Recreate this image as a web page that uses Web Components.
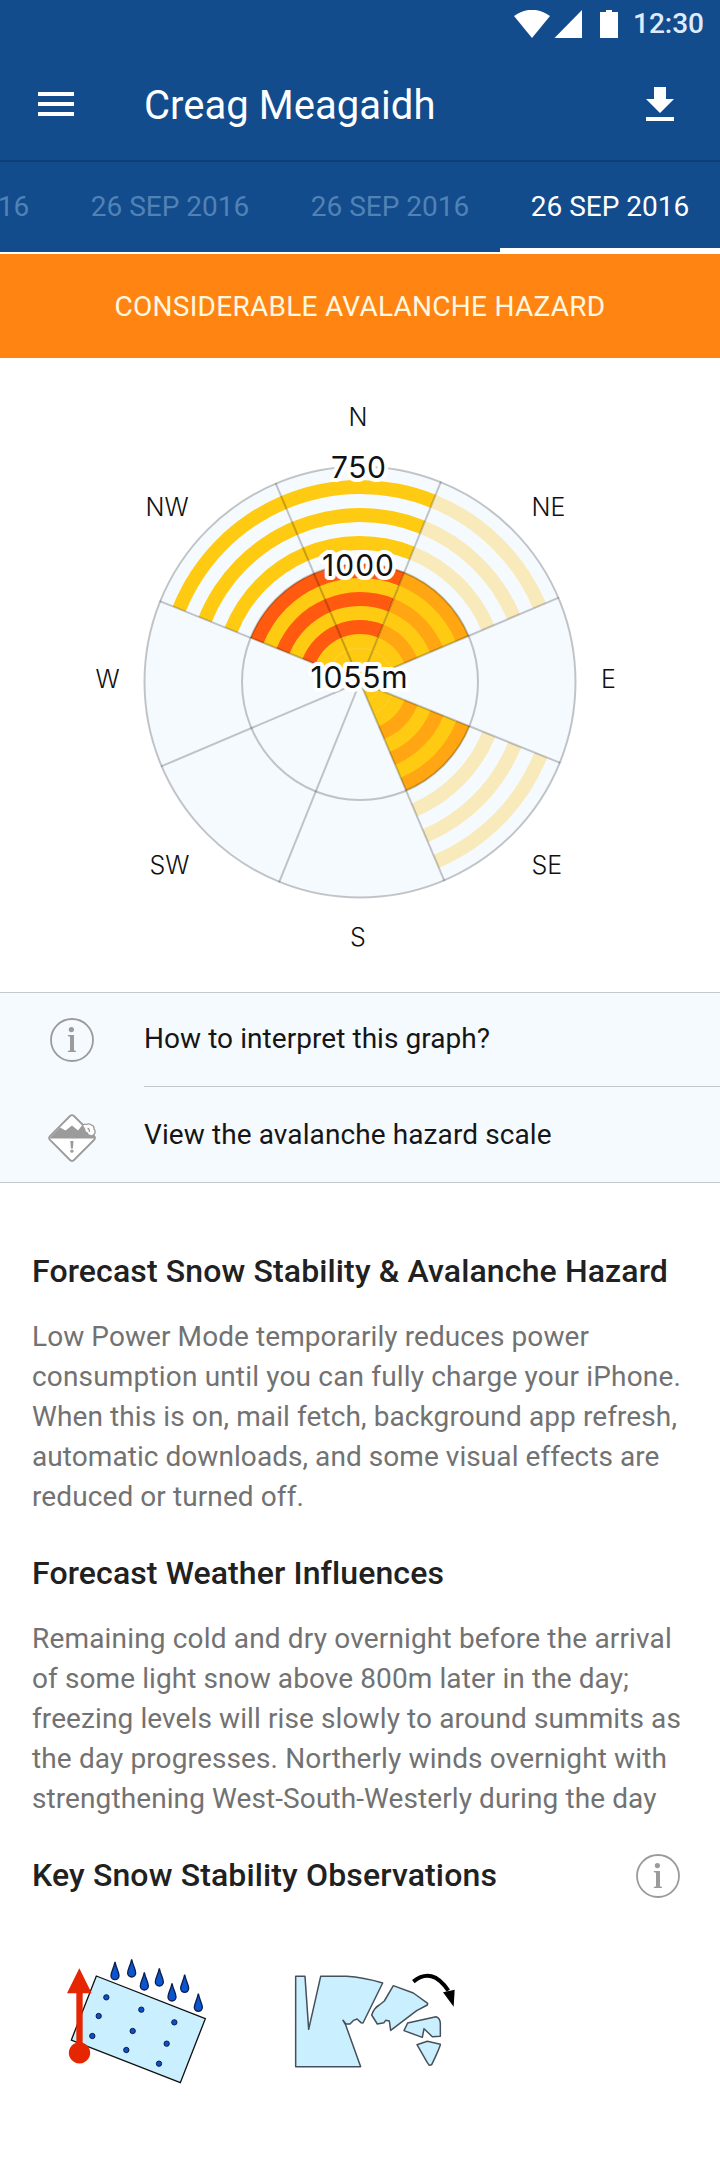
<!DOCTYPE html>
<html lang="en">
<head>
<meta charset="utf-8">
<title>Creag Meagaidh</title>
<style>
html,body{margin:0;padding:0;background:#fff}
body{font-family:Roboto,sans-serif;width:720px;overflow-x:hidden}
</style>
</head>
<body>
<avalanche-screen></avalanche-screen>
<script>
const define=(name,html,after)=>{
  const t=document.createElement('template');t.innerHTML=html;
  customElements.define(name,class extends HTMLElement{
    constructor(){super();this.attachShadow({mode:'open'}).appendChild(t.content.cloneNode(true));}
    connectedCallback(){if(after)after(this,this.shadowRoot);}
  });
};

define('info-icon',`<style>:host{display:block;width:44px;height:44px}svg{display:block}</style>
<svg width="44" height="44" viewBox="0 0 44 44" fill="#9b9b9b"><circle cx="22" cy="22" r="21" fill="none" stroke="#9b9b9b" stroke-width="1.8"/>
<circle cx="21.4" cy="11.600" r="2.600"/><path d="M17.800 17h6.200v15.200l2 .7v1.100h-8.100v-1.100l2.100-.7V18.800l-2.200-.7z"/></svg>`);

define('hazard-icon',`<style>:host{display:block;width:48px;height:48px}svg{display:block}</style>
<svg width="48" height="48" viewBox="0 0 48 48"><path d="M22 2Q24 .2 26 2L46 22Q48 24 46 26L26 46Q24 47.800 22 46L2 26Q.2 24 2 22Z" fill="#fff" stroke="#9b9b9b" stroke-width="1.800"/>
<path d="M1.500 24 12 13.500 17.500 16.500 24 11.500 30 16.500 34 11.500 38 18 46.500 22 46.500 24.500H1.500Z" fill="#9b9b9b"/>
<path d="M34.500 11.500Q36 9.500 38.500 10.500Q41.500 8.800 43.500 11.200Q46.500 11.800 46 15Q48.300 18 46 20.500Q44.500 22.500 42.500 21.500Q39.800 21.500 39.500 19Q36.500 18 36.800 15.500Z" fill="#fff" stroke="#9b9b9b" stroke-width="1.300"/>
<path d="M39.500 14.500Q41.800 14.500 41.300 17.800" fill="none" stroke="#9b9b9b" stroke-width="1.300"/>
<path d="M22.300 27h3.200l-.6 7.500h-2z" fill="#9b9b9b"/><circle cx="23.900" cy="37.200" r="1.600" fill="#9b9b9b"/></svg>`);

/* One line of text, tracked so that its advance equals the width attribute. */
define('fit-line',`<style>:host{display:block;white-space:nowrap}</style><span><slot></slot></span>`,(el,root)=>{
  const s=root.querySelector('span'),w=+el.getAttribute('width');
  const n=s.getBoundingClientRect().width;
  if(n)s.style.letterSpacing=((w-n)/el.textContent.length).toFixed(3)+'px';
});

define('status-bar',`<style>:host{display:flex;height:48px;box-sizing:border-box;padding:10px 0 10px 514px;color:#dfeafc}
svg{flex:none}fit-line{font-size:28px;font-weight:500;line-height:28px;margin-left:15px}</style>
<svg width="104" height="28" fill="#fff"><path d="M0 6Q18-6.500 36 6L18 28Z"/><path d="M68 0V28H40.500Z"/><path d="M86 2h6V0h6v2h6v26H86z"/></svg><fit-line width="71">12:30</fit-line>`);

define('app-bar',`<style>:host{display:flex;align-items:center;height:114px;box-sizing:border-box;padding:0 46px 0 38px;border-bottom:2px solid #0d3f76;color:#fff}
h1{flex:1;margin:0 0 0 70px;padding-top:4px;font-weight:400;font-size:40px;line-height:48px}svg{display:block}</style>
<svg width="36" height="24" fill="#fff"><path d="M0 0h36v4H0zM0 10h36v4H0zM0 20h36v4H0z"/></svg>
<h1><slot></slot></h1>
<svg width="28" height="34" fill="#fff"><path d="M8 0h12v12h8L14 26 0 12h8zM0 30h28v4H0z"/></svg>`);

define('date-tab',`<style>:host{display:flex;box-sizing:border-box;flex:0 0 220px;height:92px;justify-content:center;align-items:center;padding-bottom:2px;font-size:28px;color:#5182b5;border-bottom:2px solid #fff;white-space:nowrap}
:host([selected]){color:#fff;border-bottom-width:6px;padding-top:2px;padding-bottom:0}</style><slot></slot>`);
define('date-tabs',`<style>:host{display:flex;justify-content:flex-end;overflow:hidden;height:92px}</style><slot></slot>`);

define('hazard-banner',`<style>:host{display:flex;height:104px;align-items:center;justify-content:center;background:#ff8412;color:#fff8e0;font-size:28px;white-space:nowrap}</style><slot></slot>`);

define('hazard-rose',`<style>:host{display:block;height:634px}svg{display:block}
.g{fill:none;stroke:#000;stroke-opacity:.22;stroke-width:2}
.d{font:300 25px Inter,sans-serif;fill:#111}
.h{font:400 30px Inter,sans-serif;fill:#111;stroke:#fff;stroke-width:8px;stroke-linejoin:round;paint-order:stroke}</style>
<svg width="720" height="634" viewBox="0 358 720 634"></svg>`,(el,root)=>{
  const cx=360,cy=682;
  const pt=(r,a)=>{const t=a*Math.PI/180;return (cx+r*Math.sin(t)).toFixed(2)+' '+(cy-r*Math.cos(t)).toFixed(2);};
  const band=(r0,r1,a0,a1,c)=>`<path fill="${c}" d="M${pt(r1,a0)}A${r1} ${r1} 0 0 1 ${pt(r1,a1)}L${pt(r0,a1)}A${r0} ${r0} 0 0 0 ${pt(r0,a0)}Z"/>`;
  let s=`<circle cx="${cx}" cy="${cy}" r="216" fill="#f5faff"/>`;
  const sector=(a0,a1,outer,inner)=>{
    [[188,202],[160,174],[132,146]].forEach(b=>s+=band(b[0],b[1],a0,a1,outer));
    s+=band(0,118,a0,a1,'#ffca12');
    [[104,118],[76,90],[48,62]].forEach(b=>s+=band(b[0],b[1],a0,a1,inner));
    [34,20].forEach(r=>s+=`<path d="M${pt(r,a0)}A${r} ${r} 0 0 1 ${pt(r,a1)}" fill="none" stroke="#ffd84e" stroke-width=".6"/>`);
  };
  sector(-68,22,'#ffca12','#ff5a10');
  sector(22,67,'#f8eabb','#ffa612');
  sector(112,157,'#f8eabb','#ffa612');
  s+=`<circle class="g" cx="${cx}" cy="${cy}" r="215.500"/><circle class="g" cx="${cx}" cy="${cy}" r="118"/>`;
  for(let a=22;a<360;a+=45)s+=`<path class="g" d="M${cx} ${cy}L${pt(216,a)}"/>`;
  [['N',348.500,426],['NE',531.500,516],['E',601,688],['SE',531.500,874],['S',350,946],['SW',149.500,874],['W',95.500,688],['NW',145.500,516]]
    .forEach(l=>s+=`<text class="d" x="${l[1]}" y="${l[2]}">${l[0]}</text>`);
  [['750',331,478,55],['1000',322,576,72],['1055m',310.500,688,97]]
    .forEach(l=>s+=`<text class="h" x="${l[1]}" y="${l[2]}" textLength="${l[3]}">${l[0]}</text>`);
  root.querySelector('svg').innerHTML=s;
});

define('link-row',`<style>:host{display:flex;height:94px;box-sizing:border-box;color:#151515;font-size:28px;letter-spacing:.06px;white-space:nowrap}
.i{flex:0 0 144px;display:flex;align-items:center;justify-content:center;box-sizing:border-box}
.t{flex:1;display:flex;align-items:center;border-bottom:1px solid #c6c7cb;padding-bottom:2px}
:host([last]){height:95px;letter-spacing:.1px}:host([last]) .t{border:0;padding-bottom:0}:host([last]) .i{padding-top:7px}</style>
<div class="i"><slot name="icon"></slot></div><div class="t"><span><slot></slot></span></div>`);
define('link-list',`<style>:host{display:block;background:#f5faff;border-top:1px solid #c6c7cb;border-bottom:1px solid #c6c7cb}</style><slot></slot>`);

define('forecast-section',`<style>:host{display:block;padding:0 32px;margin-bottom:34px}
.h{display:flex;height:44px;align-items:center;justify-content:space-between;padding-right:8px}
h2{margin:0;font-weight:500;font-size:32px;line-height:44px;color:#212121;white-space:nowrap}
::slotted(info-icon){margin-top:2px}
.b{font-size:28px;line-height:40px;color:#727272;white-space:nowrap;padding-top:24px}</style>
<div class="h"><h2><slot name="title"></slot></h2><slot name="action"></slot></div><div class="b"><slot></slot></div>`);

define('temperature-rise-icon',`<style>:host{display:block;width:180px;height:160px}svg{display:block}</style>
<svg width="180" height="160" viewBox="0 0 540 480"><path d="M139 108 466 236 391 428 64 300Z" fill="#caeffe" stroke="#111" stroke-width="4"/>
<g class="dots" fill="#0b50c8" stroke="#0c1e4d" stroke-width="3"></g><g class="drops" fill="#0b55d0" stroke="#0c1e4d" stroke-width="4"></g>
<path d="M88 85 125 160H98V308A32 32 0 1 1 79 308V160H51Z" fill="#e62600"/></svg>`,(el,root)=>{
  root.querySelector('.dots').innerHTML=[[169,172],[146,228],[127,288],[274,209],[248,273],[229,330],[373,247],[350,311],[327,371]].map(p=>`<circle cx="${p[0]}" cy="${p[1]}" r="8"/>`).join('');
  root.querySelector('.drops').innerHTML=[[195,66],[245,58],[283,97],[328,85],[366,130],[404,104],[445,161]].map(p=>`<path d="M${p[0]} ${p[1]}C${p[0]+4} ${p[1]+20} ${p[0]+12} ${p[1]+30} ${p[0]+12} ${p[1]+41}A12 12 0 0 1 ${p[0]-12} ${p[1]+41}C${p[0]-12} ${p[1]+30} ${p[0]-4} ${p[1]+20} ${p[0]} ${p[1]}Z"/>`).join('');
});
define('brittle-snow-icon',`<style>:host{display:block;width:190px;height:140px}svg{display:block}</style>
<svg width="190" height="140" viewBox="0 0 570 420"><g fill="#caeffe" stroke="#46505a" stroke-width="4.500" stroke-linejoin="round">
<path d="M47 79H75L86 238 122 79H200Q250 82 308 99L249 219 243 218 231 207 221 211 210 222 198 222 189 211 197 225 242 350H47Z"/>
<path d="M340 107 400 129 443 160 442 165 410 182 332 241 328 213 317 211 312 218 292 222 275 195Q282 174 298 165L313 153Z"/>
<path d="M383 219 468 200Q480 204 481 220V259L457 260 432 236 427 262 372 242Z"/>
<path d="M411 284 442 274 481 283Q480 292 455 344L448 346 442 338Z"/></g>
<path d="M400 95Q456 49 505 122" fill="none" stroke="#000" stroke-width="12"/><path d="M489 127 524 119 521 170Z"/></svg>`);

define('observation-strip',`<style>:host{display:flex;gap:50px;padding-left:50px;margin-top:-15px;height:160px}::slotted(brittle-snow-icon){margin-top:10px}</style><slot></slot>`);

define('avalanche-screen',`<style>:host{display:block;width:720px;height:2180px;overflow:hidden;background:#fff}
header{background:#124c8d}
main{display:block;padding-top:66px}</style>
<header><status-bar></status-bar><app-bar><fit-line width="291.500">Creag Meagaidh</fit-line></app-bar>
<date-tabs><date-tab>26 SEP 2016</date-tab><date-tab>26 SEP 2016</date-tab><date-tab>26 SEP 2016</date-tab><date-tab selected>26 SEP 2016</date-tab></date-tabs></header>
<hazard-banner><fit-line width="491">CONSIDERABLE AVALANCHE HAZARD</fit-line></hazard-banner>
<hazard-rose></hazard-rose>
<link-list><link-row><info-icon slot="icon"></info-icon>How to interpret this graph?</link-row>
<link-row last><hazard-icon slot="icon"></hazard-icon>View the avalanche hazard scale</link-row></link-list>
<main>
<forecast-section><fit-line slot="title" width="636">Forecast Snow Stability &amp; Avalanche Hazard</fit-line>
<fit-line width="557">Low Power Mode temporarily reduces power</fit-line>
<fit-line width="649">consumption until you can fully charge your iPhone.</fit-line>
<fit-line width="645">When this is on, mail fetch, background app refresh,</fit-line>
<fit-line width="627.500">automatic downloads, and some visual effects are</fit-line>
<fit-line width="272">reduced or turned off.</fit-line></forecast-section>
<forecast-section><fit-line slot="title" width="411.500">Forecast Weather Influences</fit-line>
<fit-line width="640">Remaining cold and dry overnight before the arrival</fit-line>
<fit-line width="597">of some light snow above 800m later in the day;</fit-line>
<fit-line width="649">freezing levels will rise slowly to around summits as</fit-line>
<fit-line width="635">the day progresses. Northerly winds overnight with</fit-line>
<fit-line width="624.500">strengthening West-South-Westerly during the day</fit-line></forecast-section>
<forecast-section><fit-line slot="title" width="465">Key Snow Stability Observations</fit-line><info-icon slot="action"></info-icon></forecast-section>
<observation-strip><temperature-rise-icon></temperature-rise-icon><brittle-snow-icon></brittle-snow-icon></observation-strip>
</main>`);
</script>
</body>
</html>
